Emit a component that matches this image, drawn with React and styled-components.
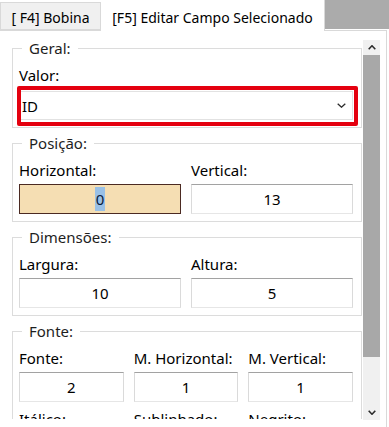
import React from "react";
import styled, { createGlobalStyle } from "styled-components";

const Global = createGlobalStyle`
  html, body { margin: 0; padding: 0; background: #fff; }
  body {
    font-family: "Noto Sans", "Open Sans", sans-serif;
    font-size: 15px;
    color: #000;
  }
  * { box-sizing: border-box; }
`;

const Frame = styled.div`
  width: 389px;
  height: 427px;
  overflow: hidden;
  background: #fff;
  display: flex;
  flex-direction: column;
`;

const TabStrip = styled.div`
  display: flex;
  align-items: flex-end;
  height: 30px;
  position: relative;
  z-index: 1;
`;

const Tab = styled.div`
  width: ${(p) => (p.$active ? "224px" : "101px")};
  height: ${(p) => (p.$active ? "31px" : "28px")};
  margin-bottom: ${(p) => (p.$active ? "-1px" : "0")};
  background: ${(p) => (p.$active ? "#fff" : "#f0f0f0")};
  border: 1px solid #d9d9d9;
  border-left: ${(p) => (p.$active ? "none" : "1px solid #d9d9d9")};
  border-top: ${(p) => (p.$active ? "none" : "1px solid #d9d9d9")};
  border-bottom: ${(p) => (p.$active ? "none" : "1px solid #d9d9d9")};
  display: flex;
  align-items: center;
  justify-content: center;
  padding-top: ${(p) => (p.$active ? "3px" : "2px")};
  white-space: nowrap;
  font-size: 14px;
  color: #000;
`;

const Filler = styled.div`
  flex: 1;
  align-self: flex-start;
  height: 29px;
  background: #ababab;
`;

const Panel = styled.div`
  width: 387px;
  flex: 1;
  border-top: 1px solid #d9d9d9;
  border-right: 1px solid #d9d9d9;
  display: flex;
  align-items: flex-start;
  padding: 0 6px 0 12px;
`;

const Viewport = styled.div`
  width: 350px;
  height: 388px;
  overflow: hidden;
  padding-top: 7px;
`;

const ScrollBar = styled.div`
  width: 17px;
  height: 380px;
  margin: 9px 0 0 1px;
  background: #f0f0f0;
  display: flex;
  flex-direction: column;
`;

const ScrollButton = styled.div`
  height: 15px;
  display: flex;
  align-items: center;
  justify-content: center;
`;

const Thumb = styled.div`
  height: 302px;
  background: #a8a8a8;
`;

const Track = styled.div`
  flex: 1;
`;

const Group = styled.fieldset`
  margin: 0 0 5px;
  padding: 0 8px 7px 6px;
  border: 1px solid #dcdcdc;
  min-width: 0;
  width: 350px;
`;

const Legend = styled.legend`
  padding: 0 7px;
  margin-left: 3px;
  line-height: 20px;
  font-size: 15px;
  color: #1e1e1e;
`;

const Row = styled.div`
  display: grid;
  grid-template-columns: repeat(${(p) => p.$cols}, 1fr);
  column-gap: 10px;
`;

const Field = styled.div`
  display: flex;
  flex-direction: column;
  min-width: 0;
`;

const Label = styled.div`
  line-height: 20px;
  margin-top: 7px;
  margin-bottom: 4px;
  white-space: nowrap;
  color: #000;
`;

const Input = styled.div`
  height: 30px;
  border: 1px solid;
  border-color: ${(p) =>
    p.$focused ? "#4b2a22" : "#a2a2a2 #dadada #e6e6e6 #dadada"};
  background: ${(p) => (p.$focused ? "#f5deb3" : "#fff")};
  display: flex;
  align-items: center;
  justify-content: center;
  font-size: 15px;
  color: #000;
`;

const Selected = styled.span`
  background: #99c0e6;
  color: #0a1a3a;
  line-height: 24px;
  padding: 0 1px;
`;

const ComboWrap = styled.div`
  position: relative;
  margin-top: 2px;
`;

const Combo = styled.div`
  height: 29px;
  border: 1px solid #e2e2e2;
  background: #fff;
  display: flex;
  align-items: center;
  justify-content: space-between;
  padding: 0 6px 0 2px;
  font-size: 15px;
  color: #000;
`;

const Highlight = styled.span`
  position: absolute;
  top: -5px;
  left: -2px;
  right: -5px;
  bottom: -6px;
  border: 4px solid #e4000f;
  border-radius: 2px;
  pointer-events: none;
`;

const Chevron = ({ up, w = 9, h = 5, sw = 1.3 }) => (
  <svg width={w} height={h} viewBox={`0 0 ${w} ${h}`} aria-hidden="true">
    <polyline
      points={
        up
          ? `0.7,${h - 0.7} ${w / 2},0.8 ${w - 0.7},${h - 0.7}`
          : `0.7,0.7 ${w / 2},${h - 0.8} ${w - 0.7},0.7`
      }
      fill="none"
      stroke="#2b2b2b"
      strokeWidth={sw}
    />
  </svg>
);

export default function App() {
  return (
    <Frame>
      <Global />
      <TabStrip>
        <Tab>[ F4] Bobina</Tab>
        <Tab $active>[F5] Editar Campo Selecionado</Tab>
        <Filler />
      </TabStrip>
      <Panel>
        <Viewport>
          <Group>
            <Legend>Geral:</Legend>
            <Field>
              <Label>Valor:</Label>
              <ComboWrap>
                <Combo>
                  <span>ID</span>
                  <Chevron />
                </Combo>
                <Highlight />
              </ComboWrap>
            </Field>
          </Group>

          <Group>
            <Legend>Posição:</Legend>
            <Row $cols={2}>
              <Field>
                <Label>Horizontal:</Label>
                <Input $focused>
                  <Selected>0</Selected>
                </Input>
              </Field>
              <Field>
                <Label>Vertical:</Label>
                <Input>13</Input>
              </Field>
            </Row>
          </Group>

          <Group>
            <Legend>Dimensões:</Legend>
            <Row $cols={2}>
              <Field>
                <Label>Largura:</Label>
                <Input>10</Input>
              </Field>
              <Field>
                <Label>Altura:</Label>
                <Input>5</Input>
              </Field>
            </Row>
          </Group>

          <Group>
            <Legend>Fonte:</Legend>
            <Row $cols={3}>
              <Field>
                <Label>Fonte:</Label>
                <Input>2</Input>
              </Field>
              <Field>
                <Label>M. Horizontal:</Label>
                <Input>1</Input>
              </Field>
              <Field>
                <Label>M. Vertical:</Label>
                <Input>1</Input>
              </Field>
            </Row>
            <Row $cols={3}>
              <Field>
                <Label>Itálico:</Label>
                <Input>0</Input>
              </Field>
              <Field>
                <Label>Sublinhado:</Label>
                <Input>0</Input>
              </Field>
              <Field>
                <Label>Negrito:</Label>
                <Input>0</Input>
              </Field>
            </Row>
          </Group>
        </Viewport>
        <ScrollBar>
          <ScrollButton>
            <Chevron up w={8} h={5} sw={1.6} />
          </ScrollButton>
          <Thumb />
          <Track />
          <ScrollButton>
            <Chevron w={8} h={5} sw={1.6} />
          </ScrollButton>
        </ScrollBar>
      </Panel>
    </Frame>
  );
}
